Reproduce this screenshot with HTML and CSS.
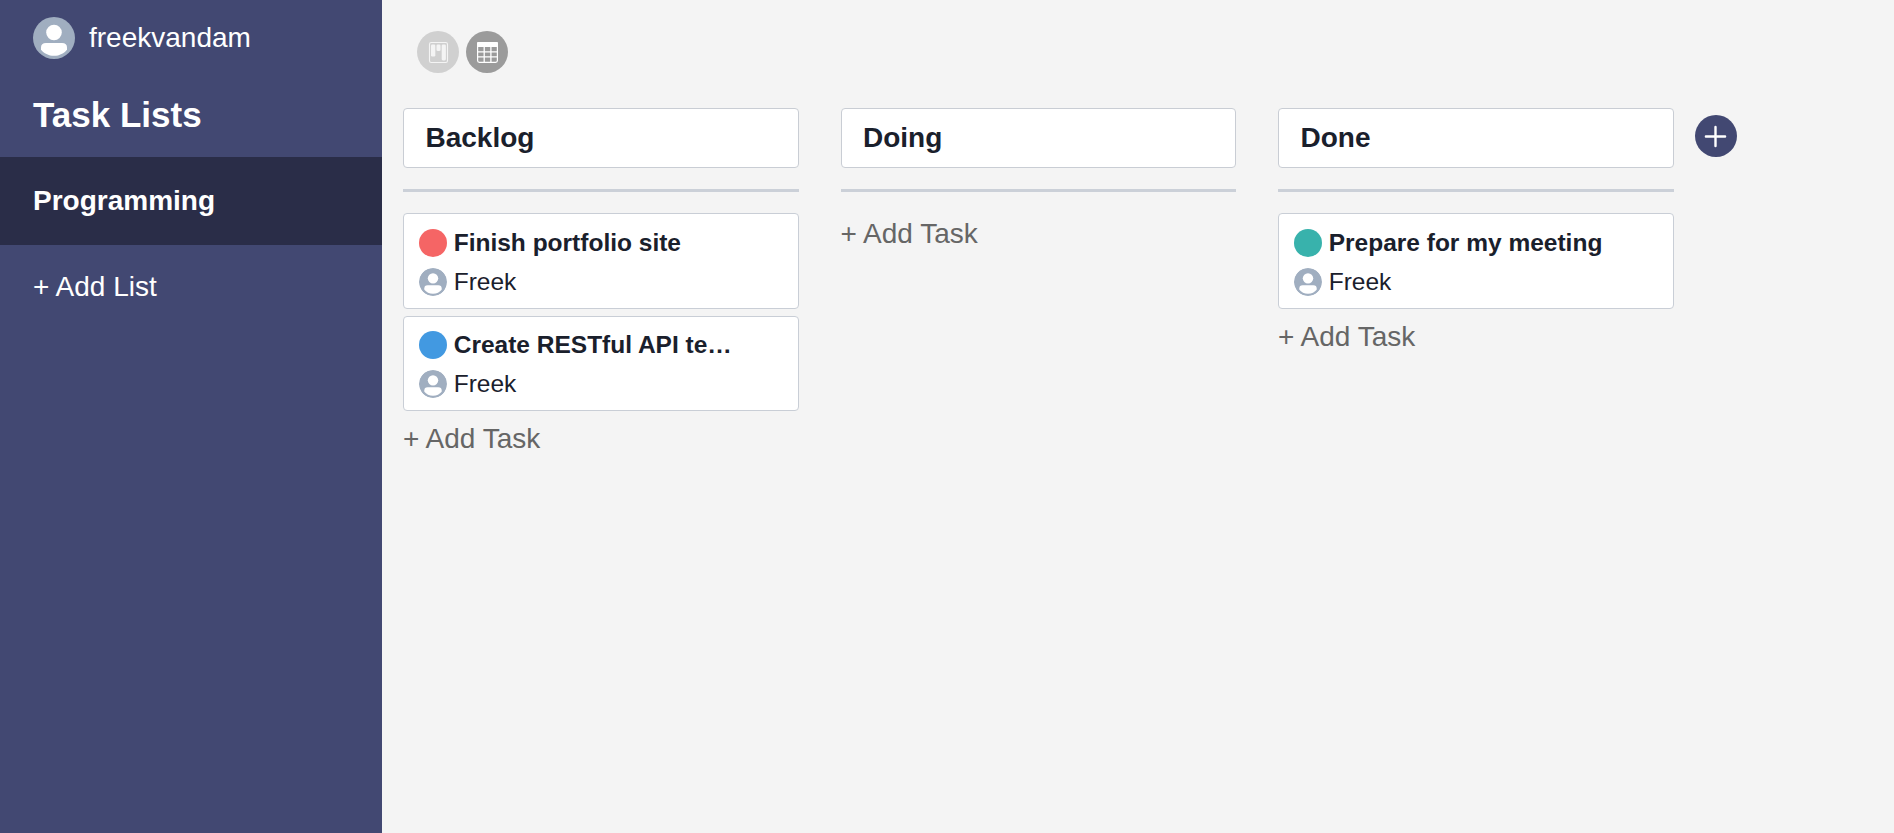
FILE: index.html
```html
<!DOCTYPE html>
<html lang="en">
<head>
<meta charset="utf-8">
<title>Task Lists</title>
<link rel="stylesheet" href="styles.css">
</head>
<body>
<svg class="sprite" width="0" height="0" aria-hidden="true">
  <symbol id="avatar" viewBox="0 0 42 42">
    <circle cx="21" cy="21" r="21" fill="#a0aec0"/>
    <circle cx="21" cy="15.5" r="7.8" fill="#fff"/>
    <path d="M13 26h16c3.400 0 5 1.700 5 4.500v2.200c-2.800 3.500-7.500 6.100-13 6.100s-10.200-2.600-13-6.100v-2.200c0-2.800 1.600-4.500 5-4.500z" fill="#fff"/>
  </symbol>
</svg>
<div class="app">
  <aside class="sidebar">
    <div class="user"><svg class="user-avatar"><use href="#avatar"/></svg><span>freekvandam</span></div>
    <h1 class="sidebar-title">Task Lists</h1>
    <a class="list-item active">Programming</a>
    <a class="list-item">+ Add List</a>
  </aside>
  <main class="main">
    <div class="views">
      <button class="view muted" aria-label="Board view">
        <svg width="42" height="42" viewBox="0 0 42 42">
          <rect x="12.500" y="11.500" width="18" height="20" rx="1.800" fill="none" stroke="#f4f4f4" stroke-width="1.100"/>
          <rect x="14" y="13.400" width="4.300" height="12.200" rx="1.300" fill="#f4f4f4"/>
          <rect x="19.500" y="13.400" width="4" height="6.600" rx="1.300" fill="#f4f4f4"/>
          <rect x="24.700" y="13.400" width="4.200" height="16" rx="1.300" fill="#f4f4f4"/>
        </svg>
      </button>
      <button class="view" aria-label="Table view">
        <svg width="42" height="42" viewBox="0 0 42 42">
          <rect x="11.600" y="11.600" width="19.800" height="19.800" rx="1.800" fill="none" stroke="#fff" stroke-width="1.200"/>
          <path d="M12 11h19a1 1 0 0 1 1 1v4H11v-4a1 1 0 0 1 1-1z" fill="#fff"/>
          <path d="M18.200 16v15M24.900 16v15M11 20.900h21M11 25.900h21" stroke="#fff" stroke-width="1.300"/>
        </svg>
      </button>
    </div>
    <div class="board">
      <section class="column">
        <h2 class="column-name">Backlog</h2>
        <div class="rule"></div>
        <article class="card">
          <div class="row title"><i class="dot red"></i><span>Finish portfolio site</span></div>
          <div class="row"><svg class="mini"><use href="#avatar"/></svg><span>Freek</span></div>
        </article>
        <article class="card">
          <div class="row title"><i class="dot blue"></i><span>Create RESTful API te…</span></div>
          <div class="row"><svg class="mini"><use href="#avatar"/></svg><span>Freek</span></div>
        </article>
        <a class="add-task">+ Add Task</a>
      </section>
      <section class="column">
        <h2 class="column-name">Doing</h2>
        <div class="rule"></div>
        <a class="add-task">+ Add Task</a>
      </section>
      <section class="column">
        <h2 class="column-name">Done</h2>
        <div class="rule"></div>
        <article class="card">
          <div class="row title"><i class="dot teal"></i><span>Prepare for my meeting</span></div>
          <div class="row"><svg class="mini"><use href="#avatar"/></svg><span>Freek</span></div>
        </article>
        <a class="add-task">+ Add Task</a>
      </section>
      <button class="add-column" aria-label="Add column">
        <svg width="42" height="42" viewBox="0 0 42 42"><path d="M20.500 11.900v19.200M10.900 21.500h19.200" stroke="#fff" stroke-width="2.400" stroke-linecap="round"/></svg>
      </button>
    </div>
  </main>
</div>
</body>
</html>
```

FILE: styles.css
```css
* { box-sizing: border-box; margin: 0; padding: 0; }
body { font-family: "Liberation Sans", Arial, sans-serif; font-size: 28px; line-height: 42px; color: #1a202c; background: #f4f4f4; }
button { border: 0; }
svg { display: block; }
.sprite { position: absolute; }
.app { display: flex; height: 833px; overflow: hidden; }
.sidebar { width: 382px; flex: none; background: #424872; color: #fff; padding-top: 17px; }
.user { display: flex; align-items: center; gap: 14px; padding-left: 33px; }
.user-avatar { width: 42px; height: 42px; }
.sidebar-title { font-size: 35px; line-height: 42px; padding: 35px 33px 21px; }
.list-item { display: block; height: 88px; padding: 23px 33px; line-height: 42px; }
.list-item + .list-item { padding-top: 21px; }
.active { background: #2a2d48; font-weight: 700; }
.main { flex: 1; padding: 31px 0 0 21px; }
.views { display: flex; gap: 7px; padding-left: 14px; margin-bottom: 35px; }
.view { width: 42px; height: 42px; border-radius: 50%; background: #9b9b9b; }
.view.muted { background: #d0d0d0; }
.board { display: flex; align-items: flex-start; gap: 42px; }
.column { width: 395.5px; flex: none; }
.column-name { height: 60px; padding: 8px 21.500px; border: 1px solid #c9cdd4; border-radius: 4px; background: #fff; font-size: 28px; line-height: 42px; }
.rule { height: 3px; margin: 21px 0 21.300px; background: #cbd0d8; }
.card { height: 95.400px; margin-bottom: 7px; padding: 14.300px 14.700px; border: 1px solid #c9ced6; border-radius: 4px; background: #fff; font-size: 24.500px; line-height: 28px; }
.row { display: flex; align-items: center; gap: 7px; margin-bottom: 11px; }
.title { font-weight: 700; }
.dot, .mini { width: 28px; height: 28px; flex: none; border-radius: 50%; }
.red { background: #f56565; }
.blue { background: #4299e1; }
.teal { background: #38b2ac; }
.add-task { display: block; color: #666; }
.add-column { width: 42px; height: 42px; margin: 7px 0 0 -21px; border-radius: 50%; background: #424872; }
```
